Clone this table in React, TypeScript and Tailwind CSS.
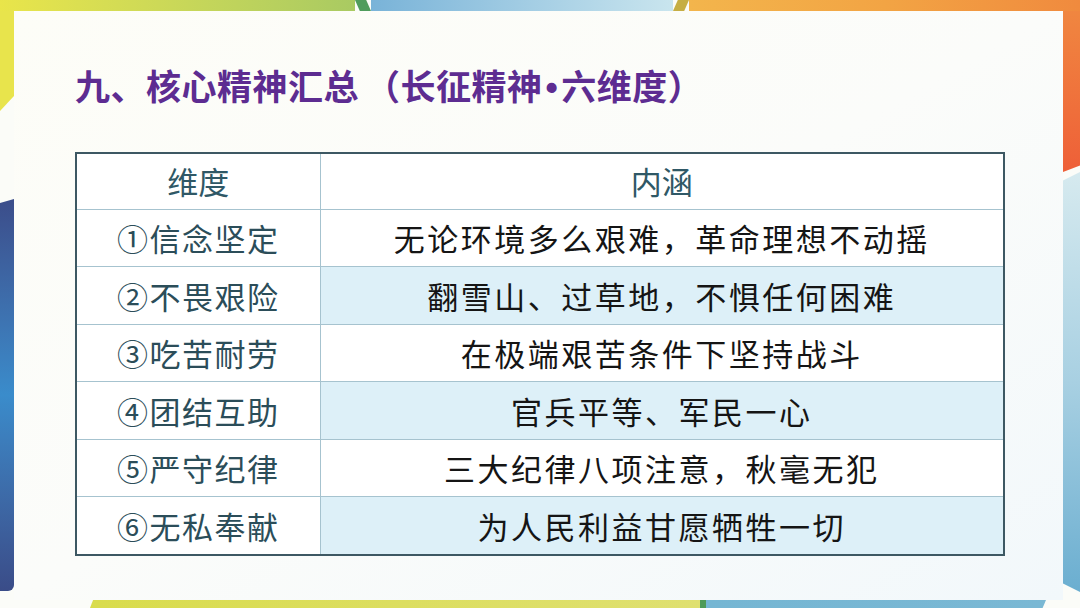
const rows = [
  { name: '①信念坚定', desc: '无论环境多么艰难，革命理想不动摇' },
  { name: '②不畏艰险', desc: '翻雪山、过草地，不惧任何困难' },
  { name: '③吃苦耐劳', desc: '在极端艰苦条件下坚持战斗' },
  { name: '④团结互助', desc: '官兵平等、军民一心' },
  { name: '⑤严守纪律', desc: '三大纪律八项注意，秋毫无犯' },
  { name: '⑥无私奉献', desc: '为人民利益甘愿牺牲一切' },
];

function TopBand() {
  return (
    <div className="flex h-[11px] w-full">
      <div className="w-[355px] bg-gradient-to-r from-[#e9e54a] to-[#a9ca62]" />
      <div className="w-[16px] bg-[#4f9c5c] [clip-path:polygon(0_0,70%_0,100%_100%,30%_100%)]" />
      <div className="w-[302px] bg-gradient-to-r from-[#79b3d8] to-[#c9e5ee]" />
      <div className="w-[16px] bg-[#c6ae44] [clip-path:polygon(30%_0,100%_0,70%_100%,0_100%)]" />
      <div className="flex-1 bg-gradient-to-r from-[#f3b54c] via-[#f2a444] to-[#f08a3e]" />
    </div>
  );
}

function BottomBand() {
  return (
    <div className="flex h-[8px] w-full">
      <div className="w-[90px]" />
      <div className="w-[610px] bg-gradient-to-r from-[#d9dc4c] to-[#dfe070] [clip-path:polygon(0.5%_0,100%_0,100%_100%,0_100%)]" />
      <div className="w-[6px] bg-[#4d9a58]" />
      <div className="w-[340px] bg-gradient-to-r from-[#75b6d3] to-[#7ab8d4] [clip-path:polygon(0_0,100%_0,99%_100%,0_100%)]" />
      <div className="flex-1" />
    </div>
  );
}

function LeftStrip() {
  return (
    <div className="flex w-[14px] flex-col">
      <div className="h-[100px] bg-[#e8e44c] [clip-path:polygon(0_0,100%_0,100%_85%,0_100%)]" />
      <div className="h-[88px]" />
      <div className="h-[392px] rounded-br-[6px] bg-gradient-to-b from-[#3b4d8a] via-[#3a8ccb] to-[#3a4c88] [clip-path:polygon(0_1%,100%_0,100%_100%,0_100%)]" />
      <div className="flex-1" />
    </div>
  );
}

function RightStrip() {
  return (
    <div className="flex w-[17px] flex-col">
      <div className="h-[161px] bg-gradient-to-b from-[#f08640] to-[#ee5f38] [clip-path:polygon(0_0,100%_0,100%_96%,0_100%)]" />
      <div className="h-[420px] bg-gradient-to-b from-[#d6eaef] via-[#a8d0e2] to-[#6aaed0] [clip-path:polygon(0_2%,100%_0,100%_100%,0_98%)]" />
      <div className="flex-1" />
    </div>
  );
}

export default function App() {
  return (
    <div
      className="flex h-[608px] w-[1080px] flex-col overflow-hidden bg-[#fbfcf8]"
      style={{ fontFamily: '"Noto Sans CJK SC", "Noto Sans", sans-serif' }}
    >
      <TopBand />
      <div className="flex flex-1">
        <LeftStrip />
        <div className="flex flex-1 flex-col bg-gradient-to-br from-[#fdfdf7] via-[#fbfcfa] to-[#f2f8fb] pl-[61px] pt-[53px]">
          <h1 className="h-[42px] text-[35px] font-bold leading-[42px] tracking-[0.5px] text-[#5d2c91]">
            九、核心精神汇总<span className="ml-[6px]">（</span>长征精神
            <span className="px-[3px] [font-family:'Liberation_Sans',sans-serif]">•</span>
            六维度）
          </h1>
          <div className="mt-[46px] w-[930px] border-2 border-[#3d5863] bg-white">
            <table className="w-full border-collapse">
              <thead>
                <tr className="h-[55px]">
                  <th className="w-[243px] border-b border-r border-[#a6c3cf] text-center text-[31px] font-normal text-[#2f5866]">
                    维度
                  </th>
                  <th className="border-b border-[#a6c3cf] text-center text-[31px] font-normal text-[#2f5866]">
                    内涵
                  </th>
                </tr>
              </thead>
              <tbody>
                {rows.map((row, i) => (
                  <tr key={row.name} className="h-[57.5px]">
                    <td
                      className={`border-r border-[#a6c3cf] bg-white text-center text-[31px] leading-none tracking-[1.5px] text-[#2b4d59] ${
                        i < rows.length - 1 ? 'border-b' : ''
                      }`}
                    >
                      {row.name}
                    </td>
                    <td
                      className={`border-[#a6c3cf] text-center text-[31px] leading-none tracking-[2.5px] text-[#151515] ${
                        i < rows.length - 1 ? 'border-b' : ''
                      } ${i % 2 === 1 ? 'bg-[#ddf0f8]' : 'bg-white'}`}
                    >
                      {row.desc}
                    </td>
                  </tr>
                ))}
              </tbody>
            </table>
          </div>
        </div>
        <RightStrip />
      </div>
      <BottomBand />
    </div>
  );
}
